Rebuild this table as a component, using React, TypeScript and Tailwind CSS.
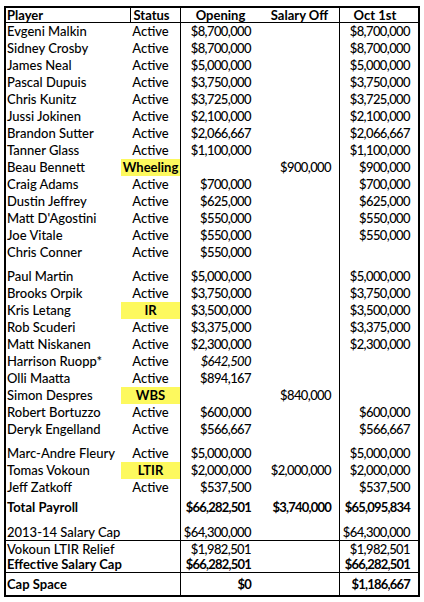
type Status = 'Active' | 'Wheeling' | 'IR' | 'WBS' | 'LTIR' | '';

interface PlayerRow {
  name: string;
  status: Status;
  opening?: string;
  off?: string;
  oct?: string;
  italic?: boolean;
}

const forwards: PlayerRow[] = [
  { name: 'Evgeni Malkin', status: 'Active', opening: '$8,700,000', oct: '$8,700,000' },
  { name: 'Sidney Crosby', status: 'Active', opening: '$8,700,000', oct: '$8,700,000' },
  { name: 'James Neal', status: 'Active', opening: '$5,000,000', oct: '$5,000,000' },
  { name: 'Pascal Dupuis', status: 'Active', opening: '$3,750,000', oct: '$3,750,000' },
  { name: 'Chris Kunitz', status: 'Active', opening: '$3,725,000', oct: '$3,725,000' },
  { name: 'Jussi Jokinen', status: 'Active', opening: '$2,100,000', oct: '$2,100,000' },
  { name: 'Brandon Sutter', status: 'Active', opening: '$2,066,667', oct: '$2,066,667' },
  { name: 'Tanner Glass', status: 'Active', opening: '$1,100,000', oct: '$1,100,000' },
  { name: 'Beau Bennett', status: 'Wheeling', off: '$900,000', oct: '$900,000' },
  { name: 'Craig Adams', status: 'Active', opening: '$700,000', oct: '$700,000' },
  { name: 'Dustin Jeffrey', status: 'Active', opening: '$625,000', oct: '$625,000' },
  { name: "Matt D'Agostini", status: 'Active', opening: '$550,000', oct: '$550,000' },
  { name: 'Joe Vitale', status: 'Active', opening: '$550,000', oct: '$550,000' },
  { name: 'Chris Conner', status: 'Active', opening: '$550,000' },
];

const defense: PlayerRow[] = [
  { name: 'Paul Martin', status: 'Active', opening: '$5,000,000', oct: '$5,000,000' },
  { name: 'Brooks Orpik', status: 'Active', opening: '$3,750,000', oct: '$3,750,000' },
  { name: 'Kris Letang', status: 'IR', opening: '$3,500,000', oct: '$3,500,000' },
  { name: 'Rob Scuderi', status: 'Active', opening: '$3,375,000', oct: '$3,375,000' },
  { name: 'Matt Niskanen', status: 'Active', opening: '$2,300,000', oct: '$2,300,000' },
  { name: 'Harrison Ruopp*', status: 'Active', opening: '$642,500', italic: true },
  { name: 'Olli Maatta', status: 'Active', opening: '$894,167' },
  { name: 'Simon Despres', status: 'WBS', off: '$840,000' },
  { name: 'Robert Bortuzzo', status: 'Active', opening: '$600,000', oct: '$600,000' },
  { name: 'Deryk Engelland', status: 'Active', opening: '$566,667', oct: '$566,667' },
];

const goalies: PlayerRow[] = [
  { name: 'Marc-Andre Fleury', status: 'Active', opening: '$5,000,000', oct: '$5,000,000' },
  { name: 'Tomas Vokoun', status: 'LTIR', opening: '$2,000,000', off: '$2,000,000', oct: '$2,000,000' },
  { name: 'Jeff Zatkoff', status: 'Active', opening: '$537,500', oct: '$537,500' },
];

function Row({ row, h = 'h-[17px]', bold = false }: { row: PlayerRow; h?: string; bold?: boolean }) {
  const flagged = row.status !== 'Active' && row.status !== '';
  // numbers need squeezing: Lato digits run wider than the sheet's font
  const num = bold ? 'tracking-[-0.8px]' : 'tracking-[-0.6px]';
  return (
    <div className={`flex ${h} items-center ${bold ? 'font-bold' : 'font-medium'}`}>
      <div className="w-[115px] pl-[1px] whitespace-nowrap">{row.name}</div>
      <div
        className={`w-[60px] h-full flex items-center justify-center border-r border-black ${
          flagged ? 'bg-[#fdf95e] font-bold' : ''
        }`}
      >
        {row.status}
      </div>
      <div className={`w-[79px] text-right pr-[9px] whitespace-nowrap ${num} ${row.italic ? 'italic' : ''}`}>{row.opening}</div>
      <div className={`w-[80px] h-full flex items-center justify-end pr-[8px] border-r border-black whitespace-nowrap ${num}`}>{row.off}</div>
      <div className={`flex-1 text-right pr-[8px] whitespace-nowrap ${num}`}>{row.oct}</div>
    </div>
  );
}

function Spacer({ h }: { h: string }) {
  return <Row row={{ name: '', status: '' }} h={h} />;
}

export default function App() {
  return (
    <div className="bg-white w-[424px] h-[602px] pt-[6px] pl-[4px] text-[13px] leading-none text-black" style={{ fontFamily: 'Lato, "Open Sans", sans-serif' }}>
      <div className="w-[416px] border-2 border-black">
        <div className="flex h-[15px] items-center font-bold border-b border-black">
          <div className="w-[125px] h-full flex items-center pl-[1px] border-r border-black">Player</div>
          <div className="w-[50px] h-full flex items-center justify-center pr-[8px] border-r border-black">Status</div>
          <div className="w-[79px] text-center">Opening</div>
          <div className="w-[80px] h-full flex items-center justify-center border-r border-black">Salary Off</div>
          <div className="flex-1 text-center pr-[8px]">Oct 1st</div>
        </div>

        {forwards.map((r) => (
          <Row key={r.name} row={r} />
        ))}
        <Spacer h="h-[7px]" />
        {defense.map((r) => (
          <Row key={r.name} row={r} />
        ))}
        <Spacer h="h-[7px]" />
        {goalies.map((r) => (
          <Row key={r.name} row={r} />
        ))}
        <Spacer h="h-[3px]" />
        <Row row={{ name: 'Total Payroll', status: '', opening: '$66,282,501', off: '$3,740,000', oct: '$65,095,834' }} bold />
        <Spacer h="h-[8px]" />
        <div className="border-b border-black">
          <Row row={{ name: '2013-14 Salary Cap', status: '', opening: '$64,300,000', oct: '$64,300,000' }} h="h-[16px]" />
        </div>
        <Row row={{ name: 'Vokoun LTIR Relief', status: '', opening: '$1,982,501', oct: '$1,982,501' }} h="h-[16px]" />
        <div className="border-b border-black">
          <Row row={{ name: 'Effective Salary Cap', status: '', opening: '$66,282,501', oct: '$66,282,501' }} h="h-[15px]" bold />
        </div>
        <Row row={{ name: 'Cap Space', status: '', opening: '$0', oct: '$1,186,667' }} h="h-[22px]" bold />
      </div>
    </div>
  );
}
